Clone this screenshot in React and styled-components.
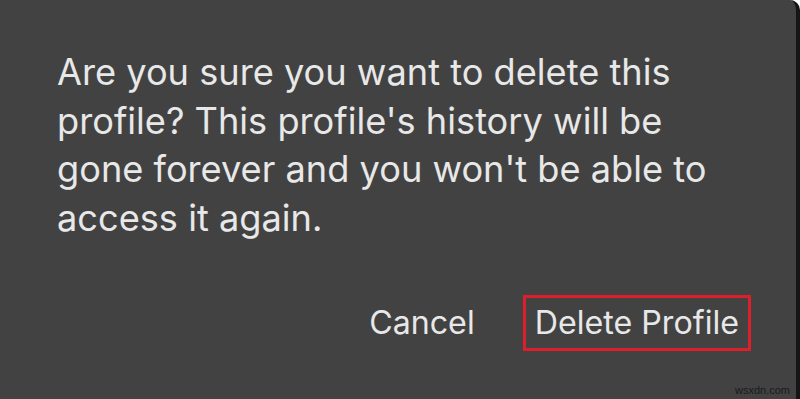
import React from "react";
import styled, { createGlobalStyle } from "styled-components";

const Global = createGlobalStyle`
  html, body {
    margin: 0;
    padding: 0;
    background: #ffffff;
  }
  body {
    font-family: Inter, Roboto, "Liberation Sans", sans-serif;
  }
`;

const Screen = styled.div`
  width: 800px;
  height: 399px;
  display: flex;
  background: #ffffff;
  overflow: hidden;
`;

const Dialog = styled.div`
  position: relative;
  flex: 1;
  display: flex;
  flex-direction: column;
  background: #424242;
  border-right: 4px solid #151515;
  border-top-right-radius: 10px;
  padding: 48px 0 0 57px;
`;

const Message = styled.p`
  margin: 0;
  font-size: 36.2px;
  line-height: 48.5px;
  color: #e8e8e8;
`;

const Actions = styled.div`
  display: flex;
  justify-content: flex-end;
  align-items: center;
  gap: 36px;
  margin-top: 53px;
  padding-right: 45px;
`;

const Action = styled.button`
  background: none;
  border: 3px solid ${(p) => (p.$highlight ? "#dc1f2b" : "transparent")};
  padding: 7px 9px 7px;
  font-family: Inter, Roboto, "Liberation Sans", sans-serif;
  font-size: 32.2px;
  color: #e8e8e8;
  cursor: pointer;
  line-height: 36px;
`;

const Watermark = styled.span`
  position: absolute;
  right: 6px;
  bottom: 3px;
  font-family: "Liberation Sans", sans-serif;
  font-size: 11px;
  color: #1a1a1a;
`;

export default function App() {
  return (
    <>
      <Global />
      <Screen>
        <Dialog>
          <Message>
            Are you sure you want to delete this
            <br />
            profile? This profile's history will be
            <br />
            gone forever and you won't be able to
            <br />
            access it again.
          </Message>
          <Actions>
            <Action>Cancel</Action>
            <Action $highlight>Delete Profile</Action>
          </Actions>
          <Watermark>wsxdn.com</Watermark>
        </Dialog>
      </Screen>
    </>
  );
}
